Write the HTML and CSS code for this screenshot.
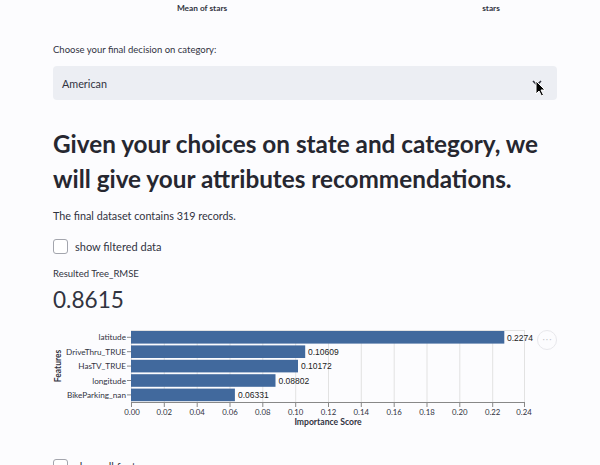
FILE: index.html
```html
<!DOCTYPE html>
<html>
<head>
<meta charset="utf-8">
<link rel="stylesheet" href="styles.css">
</head>
<body>
<main class="page">
  <div class="toprow">
    <span class="axis-cut left">Mean of stars</span>
    <span class="axis-cut right">stars</span>
  </div>

  <div class="widget-label">Choose your final decision on category:</div>
  <div class="select">
    <span class="select-value">American</span>
    <svg class="chevron" width="10" height="6" viewBox="0 0 10 6"><path d="M1 1 L5 5 L9 1" fill="none" stroke="#31333f" stroke-width="1.6"/></svg>
    <svg class="cursor" width="12" height="17" viewBox="0 0 12 17"><path d="M1 1 L1 14 L4 11 L6.5 16 L8.5 15 L6 10 L10 10 Z" fill="#000" stroke="#fff" stroke-width="1"/></svg>
  </div>

  <h1 class="heading">Given your choices on state and category, we will give your attributes recommendations.</h1>

  <p class="text">The final dataset contains 319 records.</p>

  <label class="check"><span class="box"></span><span>show filtered data</span></label>

  <div class="metric-label">Resulted Tree_RMSE</div>
  <div class="metric-value">0.8615</div>

  <div class="chart">
    <svg class="chart-svg" width="504" height="105" viewBox="0 0 504 105">
      <g class="grid" stroke="#e2e2e2" stroke-width="1">
        <line x1="78.5" y1="5" x2="78.5" y2="77"/>
        <line x1="111.3" y1="5" x2="111.3" y2="77"/>
        <line x1="144.2" y1="5" x2="144.2" y2="77"/>
        <line x1="177" y1="5" x2="177" y2="77"/>
        <line x1="209.8" y1="5" x2="209.8" y2="77"/>
        <line x1="242.7" y1="5" x2="242.7" y2="77"/>
        <line x1="275.5" y1="5" x2="275.5" y2="77"/>
        <line x1="308.3" y1="5" x2="308.3" y2="77"/>
        <line x1="341.2" y1="5" x2="341.2" y2="77"/>
        <line x1="374" y1="5" x2="374" y2="77"/>
        <line x1="406.8" y1="5" x2="406.8" y2="77"/>
        <line x1="439.7" y1="5" x2="439.7" y2="77"/>
        <line x1="471.5" y1="5" x2="471.5" y2="77"/>
        <line x1="78" y1="5.5" x2="472" y2="5.5"/>
      </g>
      <g class="bars" fill="#41699d">
        <rect x="78" y="6" width="373.3" height="12.6"/>
        <rect x="78" y="20.4" width="174.2" height="12.6"/>
        <rect x="78" y="34.8" width="167" height="12.6"/>
        <rect x="78" y="49.2" width="144.5" height="12.6"/>
        <rect x="78" y="63.6" width="103.9" height="12.6"/>
      </g>
      <g class="vals" font-family="'Liberation Sans', Arial, sans-serif" font-size="8.5" fill="#222">
        <text x="454" y="15.5">0.2274</text>
        <text x="255" y="29.9">0.10609</text>
        <text x="248" y="44.3">0.10172</text>
        <text x="225.5" y="58.7">0.08802</text>
        <text x="185" y="73.1">0.06331</text>
      </g>
      <g class="yticks" stroke="#888" stroke-width="1">
        <line x1="74" y1="12.3" x2="78" y2="12.3"/>
        <line x1="74" y1="26.7" x2="78" y2="26.7"/>
        <line x1="74" y1="41.1" x2="78" y2="41.1"/>
        <line x1="74" y1="55.5" x2="78" y2="55.5"/>
        <line x1="74" y1="69.9" x2="78" y2="69.9"/>
      </g>
      <g class="ylabels" font-family="Lato, sans-serif" font-size="8.2" fill="#31333f" text-anchor="end">
        <text x="73" y="15.3">latitude</text>
        <text x="73" y="29.7">DriveThru_TRUE</text>
        <text x="73" y="44.1">HasTV_TRUE</text>
        <text x="73" y="58.5">longitude</text>
        <text x="73" y="72.9">BikeParking_nan</text>
      </g>
      <text class="ytitle" transform="translate(8 41) rotate(-90)" text-anchor="middle" font-family="Lato, sans-serif" font-size="8.5" font-weight="700" fill="#31333f">Features</text>
      <g class="xaxis" stroke="#888" stroke-width="1">
        <line x1="78" y1="77.5" x2="472" y2="77.5"/>
        <line x1="78.5" y1="77" x2="78.5" y2="82"/>
        <line x1="111.3" y1="77" x2="111.3" y2="82"/>
        <line x1="144.2" y1="77" x2="144.2" y2="82"/>
        <line x1="177" y1="77" x2="177" y2="82"/>
        <line x1="209.8" y1="77" x2="209.8" y2="82"/>
        <line x1="242.7" y1="77" x2="242.7" y2="82"/>
        <line x1="275.5" y1="77" x2="275.5" y2="82"/>
        <line x1="308.3" y1="77" x2="308.3" y2="82"/>
        <line x1="341.2" y1="77" x2="341.2" y2="82"/>
        <line x1="374" y1="77" x2="374" y2="82"/>
        <line x1="406.8" y1="77" x2="406.8" y2="82"/>
        <line x1="439.7" y1="77" x2="439.7" y2="82"/>
        <line x1="471.5" y1="77" x2="471.5" y2="82"/>
      </g>
      <g class="xlabels" font-family="Lato, sans-serif" font-size="7.8" fill="#31333f" text-anchor="middle">
        <text x="79" y="90">0.00</text>
        <text x="111.3" y="90">0.02</text>
        <text x="144.2" y="90">0.04</text>
        <text x="177" y="90">0.06</text>
        <text x="209.8" y="90">0.08</text>
        <text x="242.7" y="90">0.10</text>
        <text x="275.5" y="90">0.12</text>
        <text x="308.3" y="90">0.14</text>
        <text x="341.2" y="90">0.16</text>
        <text x="374" y="90">0.18</text>
        <text x="406.8" y="90">0.20</text>
        <text x="439.7" y="90">0.22</text>
        <text x="471" y="90">0.24</text>
      </g>
      <text class="xtitle" x="275" y="100" text-anchor="middle" font-family="Lato, sans-serif" font-size="8.6" font-weight="700" fill="#31333f">Importance Score</text>
    </svg>
    <button class="more" aria-label="more">···</button>
  </div>

  <label class="check bottom"><span class="box"></span><span>show all features</span></label>
</main>
</body>
</html>
```

FILE: styles.css
```css
html, body {
  margin: 0;
  padding: 0;
  background: #fcfcfe;
  color: #31333f;
  font-family: Lato, "Noto Sans", sans-serif;
  overflow: hidden;
  height: 465px;
}

.page {
  width: 504px;
  margin-left: 53px;
}

.toprow {
  height: 16px;
  display: flex;
  margin-left: -53px;
  width: 600px;
}

.axis-cut {
  font-size: 8.3px;
  font-weight: 700;
  line-height: 16px;
  color: #31333f;
  text-align: center;
}

.axis-cut.left {
  margin-left: 62px;
  width: 280px;
}

.axis-cut.right {
  margin-left: 104px;
  width: 90px;
}

.widget-label {
  margin-top: 26px;
  font-size: 9.5px;
  line-height: 16px;
}

.select {
  position: relative;
  margin-top: 8px;
  height: 34px;
  background: #eceef3;
  border-radius: 4px;
  display: flex;
  align-items: center;
  padding: 0 9px;
  font-size: 10.8px;
}

.select-value {
  flex: 1;
}

.chevron {
  margin-right: 6px;
}

.cursor {
  position: absolute;
  left: 482px;
  top: 14px;
}

.heading {
  margin: 26px 0 0;
  font-size: 24.3px;
  font-weight: 700;
  line-height: 35px;
  color: #262730;
}

.text {
  margin: 11px 0 0;
  font-size: 10.8px;
  line-height: 18px;
}

.check {
  display: flex;
  align-items: center;
  gap: 7px;
  margin-top: 13px;
  height: 16px;
  font-size: 11px;
}

.box {
  width: 13px;
  height: 13px;
  border: 1px solid #a3a5ad;
  border-radius: 3px;
  background: #fff;
}

.metric-label {
  margin-top: 13px;
  font-size: 9.5px;
  line-height: 14px;
}

.metric-value {
  margin-top: 4px;
  font-size: 22.6px;
  line-height: 30px;
}

.chart {
  position: relative;
  margin-top: 10px;
  height: 105px;
}

.chart-svg {
  display: block;
}

.more {
  position: absolute;
  left: 484px;
  top: 5px;
  width: 20px;
  height: 20px;
  border-radius: 50%;
  border: 1px solid #e8e8ec;
  background: #fcfcfe;
  color: #c0c1c6;
  font-size: 10px;
  line-height: 1;
  padding: 0;
}

.check.bottom {
  margin-top: 28px;
}
```
